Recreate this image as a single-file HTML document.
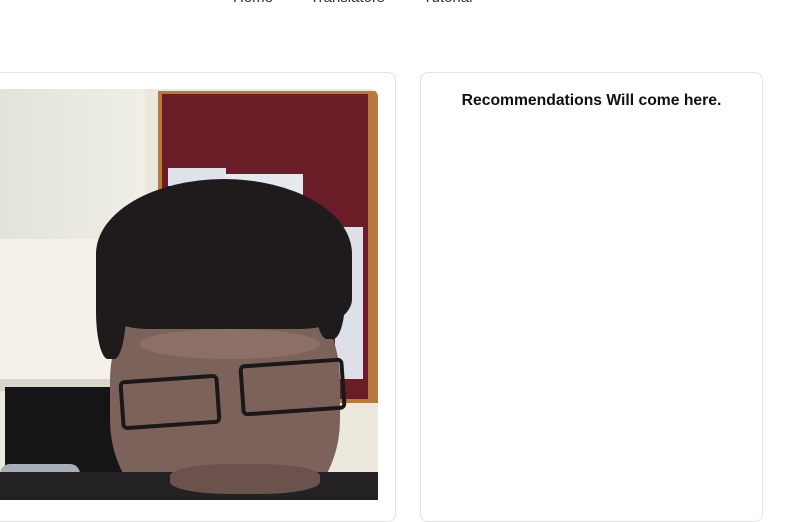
<!DOCTYPE html>
<html><head><style>
*{margin:0;padding:0;box-sizing:border-box}
body{width:800px;height:500px;overflow:hidden;background:#fff;font-family:"Liberation Sans",sans-serif;position:relative}
.nav{position:absolute;top:-11px;font-size:15px;color:#333}
.card{position:absolute;border:1px solid #e3e3e3;border-radius:8px;background:#fff}
.a{position:absolute}
</style></head><body>
<div class="nav" style="left:233px">Home</div>
<div class="nav" style="left:310px">Translators</div>
<div class="nav" style="left:423px">Tutorial</div>

<div class="card" style="left:-10px;top:72px;width:406px;height:450px"></div>
<div class="card" style="left:420px;top:72px;width:343px;height:450px">
<div style="text-align:center;margin-top:19px;font-weight:bold;font-size:15.7px;color:#111">Recommendations Will come here.</div>
</div>

<div class="a" style="left:0;top:89px;width:378px;height:411px;overflow:hidden;border-top-right-radius:8px;background:#ebe9de">
 <div class="a" style="left:0;top:150px;width:160px;height:140px;background:#f3f1e8"></div>
 <div class="a" style="left:0;top:290px;width:160px;height:12px;background:#d8d6cc"></div>
 <div class="a" style="left:0;top:0;width:145px;height:150px;background:linear-gradient(90deg,#e2e3dc,#f0efe6)"></div>
 <div class="a" style="left:158px;top:2px;width:220px;height:312px;background:#b87a3a"></div>
 <div class="a" style="left:162px;top:5px;width:206px;height:305px;background:#6a1d26"></div>
 <div class="a" style="left:168px;top:79px;width:58px;height:18px;background:#dfe2ea"></div>
 <div class="a" style="left:225px;top:85px;width:78px;height:25px;background:#e6e8ee"></div>
 <div class="a" style="left:335px;top:138px;width:28px;height:152px;background:#dde0e8"></div>
 <div class="a" style="left:5px;top:298px;width:125px;height:90px;background:#151518"></div>
 <div class="a" style="left:0;top:375px;width:80px;height:36px;background:#a8aeb8;border-radius:10px"></div>
 <div class="a" style="left:110px;top:175px;width:230px;height:260px;background:#7b625b;border-radius:45% 45% 40% 40%"></div>
 <div class="a" style="left:96px;top:90px;width:256px;height:150px;background:#1f1b1d;border-radius:50% 50% 20% 20%"></div>
 <div class="a" style="left:96px;top:150px;width:30px;height:120px;background:#1f1b1d;border-radius:40%"></div>
 <div class="a" style="left:315px;top:150px;width:30px;height:100px;background:#1f1b1d;border-radius:40%"></div>
 <div class="a" style="left:140px;top:240px;width:180px;height:30px;background:#8c7068;border-radius:50%"></div>
 <div class="a" style="left:120px;top:288px;width:100px;height:50px;border:4px solid #1c1718;border-radius:6px;transform:rotate(-4deg)"></div>
 <div class="a" style="left:240px;top:272px;width:105px;height:52px;border:4px solid #1c1718;border-radius:6px;transform:rotate(-4deg)"></div>
 <div class="a" style="left:0;top:383px;width:378px;height:30px;background:#232124"></div>
 <div class="a" style="left:170px;top:375px;width:150px;height:30px;background:#6b524c;border-radius:40%"></div>
</div>
</body></html>
